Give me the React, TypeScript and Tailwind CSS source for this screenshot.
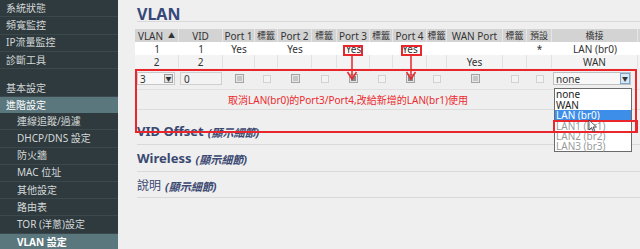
import React from 'react'

const font = "font-['Noto_Sans','Noto_Sans_CJK_TC',sans-serif]"

const topMenu = ['系統狀態', '頻寬監控', 'IP流量監控', '診斷工具']
const subMenu = ['連線追蹤/過濾', 'DHCP/DNS 設定', '防火牆', 'MAC 位址', '其他設定', '路由表', 'TOR (洋蔥)設定']

const cols = 'grid grid-cols-[44px_44px_32px_23px_34px_25px_33px_23px_34px_20px_56px_24px_25px_86px]'

const headers = ['VLAN', 'VID', 'Port 1', '標籤', 'Port 2', '標籤', 'Port 3', '標籤', 'Port 4', '標籤', 'WAN Port', '標籤', '預設', '橋接']

const row1 = ['1', '1', 'Yes', '', 'Yes', '', 'Yes', '', 'Yes', '', '', '', '*', 'LAN (br0)']
const row2 = ['2', '2', '', '', '', '', '', '', '', '', 'Yes', '', '', 'WAN']

// checkbox kinds for the edit row: p = port (grey), t = tag (light), d = selected port (dark)
const boxes = ['p', 't', 'p', 't', 'd', 't', 'd', 't', 'p', 't', 't']

function Box({ kind }: { kind: string }) {
  if (kind === 't') {
    return <span className="block w-[8px] h-[8px] border border-[#d2d2d2] bg-[#f3f3f3]" />
  }
  return (
    <span className="flex items-center justify-center w-[9px] h-[9px] border border-[#a4a4a4] bg-[#e6e6e6]">
      <span className={`block w-[5px] h-[5px] ${kind === 'd' ? 'bg-[#8a8a8a]' : 'bg-[#c6c6c6]'}`} />
    </span>
  )
}

function Cell({ text, border }: { text: string; border?: string }) {
  const small = text === '標籤' || text === '預設' || text === '橋接'
  return (
    <div
      className={`flex items-center justify-center whitespace-nowrap overflow-hidden leading-none ${border ?? ''} ${
        small ? 'text-[9px]' : 'text-[10px]'
      }`}
    >
      {text}
    </div>
  )
}

function Section({ title }: { title: string }) {
  return (
    <div className="h-[27px] flex items-end pb-[6px] border-b border-[#d9d9d9] ml-[2px]">
      <span className="text-[13px] font-bold text-[#3a4871] leading-none">{title}</span>
      <span className="ml-[4px] text-[11px] italic font-bold text-[#3a4871] leading-none">(顯示細節)</span>
    </div>
  )
}

function Arrow() {
  return (
    <svg width="12" height="26" viewBox="0 0 12 26">
      <line x1="6" y1="0" x2="6" y2="21" stroke="#e8262c" strokeWidth="1.5" />
      <path d="M1.5 17 L6 24 L10.5 17" fill="none" stroke="#e8262c" strokeWidth="1.5" />
    </svg>
  )
}

export default function App() {
  return (
    <div className={`w-[640px] h-[249px] overflow-hidden flex bg-[#efefef] ${font}`}>
      {/* Sidebar */}
      <div className="w-[118px] shrink-0 bg-[#2e3a3e] text-[10px] text-[#d4d8d8]">
        {topMenu.map((m) => (
          <div key={m} className="h-[17.3px] flex items-center pl-[6px] border-b border-[#3b484c]">
            {m}
          </div>
        ))}
        <div className="h-[11px]" />
        <div className="h-[17px] flex items-center pl-[6px] border-b border-[#3b484c]">基本設定</div>
        <div className="h-[16px] flex items-center pl-[6px] bg-[#5a777d] text-white">進階設定</div>
        {subMenu.map((m) => (
          <div key={m} className="h-[17.2px] flex items-center pl-[17px] border-b border-[#3b484c]">
            {m}
          </div>
        ))}
        <div className="h-[17px] flex items-center pl-[17px] bg-[#5a777d] text-white font-bold">VLAN 設定</div>
      </div>

      {/* Main */}
      <div className="relative flex-1 pl-[17px]">
        <div className="ml-[2px] h-[22px] border-b border-[#d9d9d9] pt-[2px]">
          <span className="text-[16px] font-bold text-[#36477a] leading-none">VLAN</span>
        </div>

        <div className="mt-[7px] text-[#333]">
          <div className={`${cols} h-[13px] bg-[#d3d3d3]`}>
            {headers.map((h, i) =>
              i === 0 ? (
                <div key={i} className="flex items-center justify-center gap-[5px] whitespace-nowrap text-[10px] leading-none border-r border-[#e6e6e6]">
                  VLAN <span className="text-[7px]">▲</span>
                </div>
              ) : (
                <Cell key={i} text={h} border="border-r border-[#e6e6e6]" />
              )
            )}
          </div>
          <div className={`${cols} h-[13px] bg-white`}>
            {row1.map((c, i) => (
              <Cell key={i} text={c} />
            ))}
          </div>
          <div className={`${cols} h-[13px] bg-[#f4f4f4]`}>
            {row2.map((c, i) => (
              <Cell key={i} text={c} border="border-r border-[#e2e2e2]" />
            ))}
          </div>

          {/* Edit row */}
          <div className={`${cols} h-[22px] items-center border-b border-[#e0e0e0] text-[10px]`}>
            <div className="pl-[2px]">
              <div className="w-[38px] h-[13px] flex items-center justify-between bg-[#f7f7f7] border border-[#c8c8c8] pl-[2px] pr-[1px]">
                <span className="leading-none">3</span>
                <span className="w-[9px] h-[9px] bg-[#e2e2e2] border border-[#999] flex items-center justify-center text-[6px] leading-none">▼</span>
              </div>
            </div>
            <div className="pl-[1px]">
              <div className="w-[42px] h-[13px] flex items-center bg-[#f2f2f2] border border-[#cfcfcf] pl-[3px] leading-none">0</div>
            </div>
            {boxes.map((k, i) => (
              <div key={i} className="flex items-center justify-center">
                <Box kind={k} />
              </div>
            ))}
            <div className="pl-[1px]">
              <div className="w-[78px] h-[13px] flex items-center justify-between bg-[#f7f7f7] border border-[#c0c0c0] pl-[2px]">
                <span className="leading-none">none</span>
                <span className="w-[10px] h-[11px] bg-[#dbe8f4] border border-[#7aa7d4] flex items-center justify-center text-[6px] leading-none">▼</span>
              </div>
            </div>
          </div>
          <div className="h-[20px] border-b border-[#dcdcdc] flex items-center pl-[93px] text-[10px] text-[#ec2a2e] leading-none">
            取消LAN(br0)的Port3/Port4,改給新增的LAN(br1)使用
          </div>
        </div>

        <div className="mt-[8px]">
          <Section title="VID Offset" />
          <Section title="Wireless" />
          <div className="h-[26px] flex items-end pb-[5px] border-b border-[#d9d9d9] ml-[2px]">
            <span className="text-[12px] text-[#3a4871] leading-none">說明</span>
            <span className="ml-[4px] text-[11px] italic font-bold text-[#3a4871] leading-none">(顯示細節)</span>
          </div>
        </div>

        {/* Annotations */}
        <div className="absolute left-[17px] top-[69px] w-[502px] h-[64px] border-2 border-[#e8262c] pointer-events-none" />
        <div className="absolute left-[225px] top-[45px] w-[20px] h-[11px] border-2 border-[#e8262c]" />
        <div className="absolute left-[283px] top-[45px] w-[21px] h-[11px] border-2 border-[#e8262c]" />
        <div className="absolute left-[228px] top-[55px]">
          <Arrow />
        </div>
        <div className="absolute left-[287px] top-[55px]">
          <Arrow />
        </div>

        {/* Dropdown list */}
        <div className="absolute left-[436px] top-[88px] w-[78px] bg-white border border-[#6b6b6b] text-[10px] leading-none">
          <div className="h-[10px] flex items-center pl-[1px] text-[#222]">none</div>
          <div className="h-[11px] flex items-center pl-[1px] text-[#222]">WAN</div>
          <div className="h-[10px] flex items-center pl-[1px] bg-[#3d8ee8] text-white">LAN (br0)</div>
          <div className="h-[11px] flex items-center pl-[1px] text-[#9a9a9a]">LAN1 (br1)</div>
          <div className="h-[10px] flex items-center pl-[1px] text-[#9a9a9a]">LAN2 (br2)</div>
          <div className="h-[10px] flex items-center pl-[1px] text-[#9a9a9a]">LAN3 (br3)</div>
        </div>
        <div className="absolute left-[435px] top-[120px] w-[85px] h-[13px] border-2 border-[#e8262c]" />
        <svg className="absolute left-[470px] top-[119px]" width="10" height="14" viewBox="0 0 10 14">
          <path d="M1 1 L1 11 L3.5 8.5 L5.5 13 L7 12.3 L5 8 L8.5 8 Z" fill="white" stroke="#333" strokeWidth="0.8" />
        </svg>
      </div>
    </div>
  )
}
